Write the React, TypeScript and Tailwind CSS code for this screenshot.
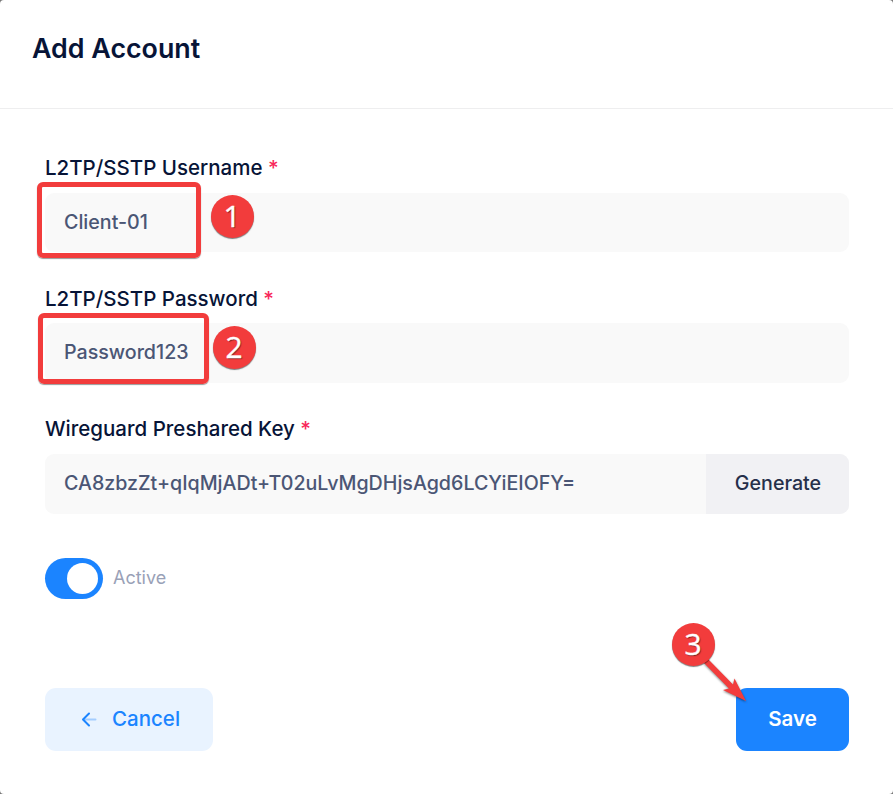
import type { ReactNode } from "react";

interface FieldProps {
  label: string;
  className?: string;
  children: ReactNode;
}

function Field({ label, className, children }: FieldProps) {
  return (
    <div className={className}>
      <div className="h-[38px] text-[20.5px] leading-[26px] font-medium whitespace-nowrap text-[#071437]">
        {label} <span className="text-[#f8285a]">*</span>
      </div>
      {children}
    </div>
  );
}

interface MarkerProps {
  step: number;
  className: string;
}

function Marker({ step, className }: MarkerProps) {
  return (
    <div
      className={`absolute flex size-[43px] items-center justify-center rounded-full bg-[#f23c3c] pb-[1px] font-['Open_Sans','Noto_Sans',sans-serif] text-[30px] leading-none font-medium text-white shadow-[0_1px_1px_rgba(0,0,0,0.5)] [-webkit-text-stroke:0.4px_white] [text-shadow:1px_1px_1px_rgba(0,0,0,0.5)] ${className}`}
    >
      {step}
    </div>
  );
}

export default function App() {
  return (
    <div className="h-[794px] w-[893px] overflow-hidden bg-[#777]">
      <div className="relative flex h-full flex-col rounded-[4px] bg-white font-['Inter',sans-serif]">
        <header className="h-[109px] border-b border-[#eeeeef] px-8 pt-[31px]">
          <h2 className="text-[26.8px] leading-[34px] font-semibold text-[#071437]">Add Account</h2>
        </header>

        <main className="pr-[44px] pl-[45px]">
          <Field label="L2TP/SSTP Username" className="pt-[46px]">
            <div className="flex h-[59px] items-center rounded-[9px] bg-[#f9f9f9] px-[19px] pt-[1px] text-[19.65px] font-medium text-[#4b5675]">
              Client-01
            </div>
          </Field>

          <Field label="L2TP/SSTP Password" className="pt-[34px]">
            <div className="-mt-px flex h-[60px] items-center rounded-[9px] bg-[#f9f9f9] px-[19px] pb-[1px] text-[19.65px] font-medium text-[#4b5675]">
              Password123
            </div>
          </Field>

          <Field label="Wireguard Preshared Key" className="pt-[33px]">
            <div className="flex h-[60px] overflow-hidden rounded-[9px] bg-[#f9f9f9] text-[19.65px] font-medium">
              <div className="flex flex-1 items-center px-[19px] pb-[1px] text-[#4b5675]">
                CA8zbzZt+qIqMjADt+T02uLvMgDHjsAgd6LCYiEIOFY=
              </div>
              <button className="w-[143px] bg-[#f1f1f4] pb-[1px] pl-[1px] text-[#252f4a]">Generate</button>
            </div>
          </Field>

          <div className="mt-[44px] flex items-center gap-[10px]">
            <div className="flex h-[41px] w-[58px] items-center justify-end rounded-full bg-[#1b84ff] pr-[5px]">
              <div className="size-[31px] rounded-full bg-white" />
            </div>
            <span className="pb-[2px] text-[18px] text-[#99a1b7]">Active</span>
          </div>

          <div className="mt-[89px] flex justify-between text-[20.5px]">
            <button className="flex h-[63px] w-[168px] items-center rounded-[11px] bg-[#e9f3ff] pl-[36px] font-medium text-[#1b84ff]">
              <svg className="mr-[15px] mb-[1px]" width="16" height="16" viewBox="0 0 16 16" fill="none" strokeLinecap="round">
                <path d="M3 8.5H14.5" stroke="#a4cdff" strokeWidth="2" />
                <path d="M8 2.5L2 8.5L8 14.5" stroke="#1b84ff" strokeWidth="2" strokeLinejoin="round" />
              </svg>
              Cancel
            </button>
            <button className="h-[63px] w-[113px] rounded-[11px] bg-[#1b84ff] font-semibold text-white">Save</button>
          </div>
        </main>

        {/* step callouts */}
        <div className="absolute top-[182px] left-[37px] h-[76px] w-[164px] rounded-[6px] border-[5px] border-[#f23c3c] shadow-[0_1px_1px_rgba(0,0,0,0.4)]" />
        <div className="absolute top-[313px] left-[38px] h-[71px] w-[171px] rounded-[6px] border-[5px] border-[#f23c3c] shadow-[0_1px_1px_rgba(0,0,0,0.4)]" />
        <Marker step={1} className="top-[195px] left-[210.5px]" />
        <Marker step={2} className="top-[326px] left-[212.5px]" />
        <svg
          className="absolute top-[650px] left-[696px] drop-shadow-[0_1px_1px_rgba(0,0,0,0.5)]"
          width="56"
          height="56"
          viewBox="0 0 56 56"
          fill="#f23c3c"
        >
          <path d="M8 13L12 9L37 34.5L38.5 28.5L50 51L27 40L33 38.5Z" />
        </svg>
        <Marker step={3} className="top-[623px] left-[671.5px]" />
      </div>
    </div>
  );
}
